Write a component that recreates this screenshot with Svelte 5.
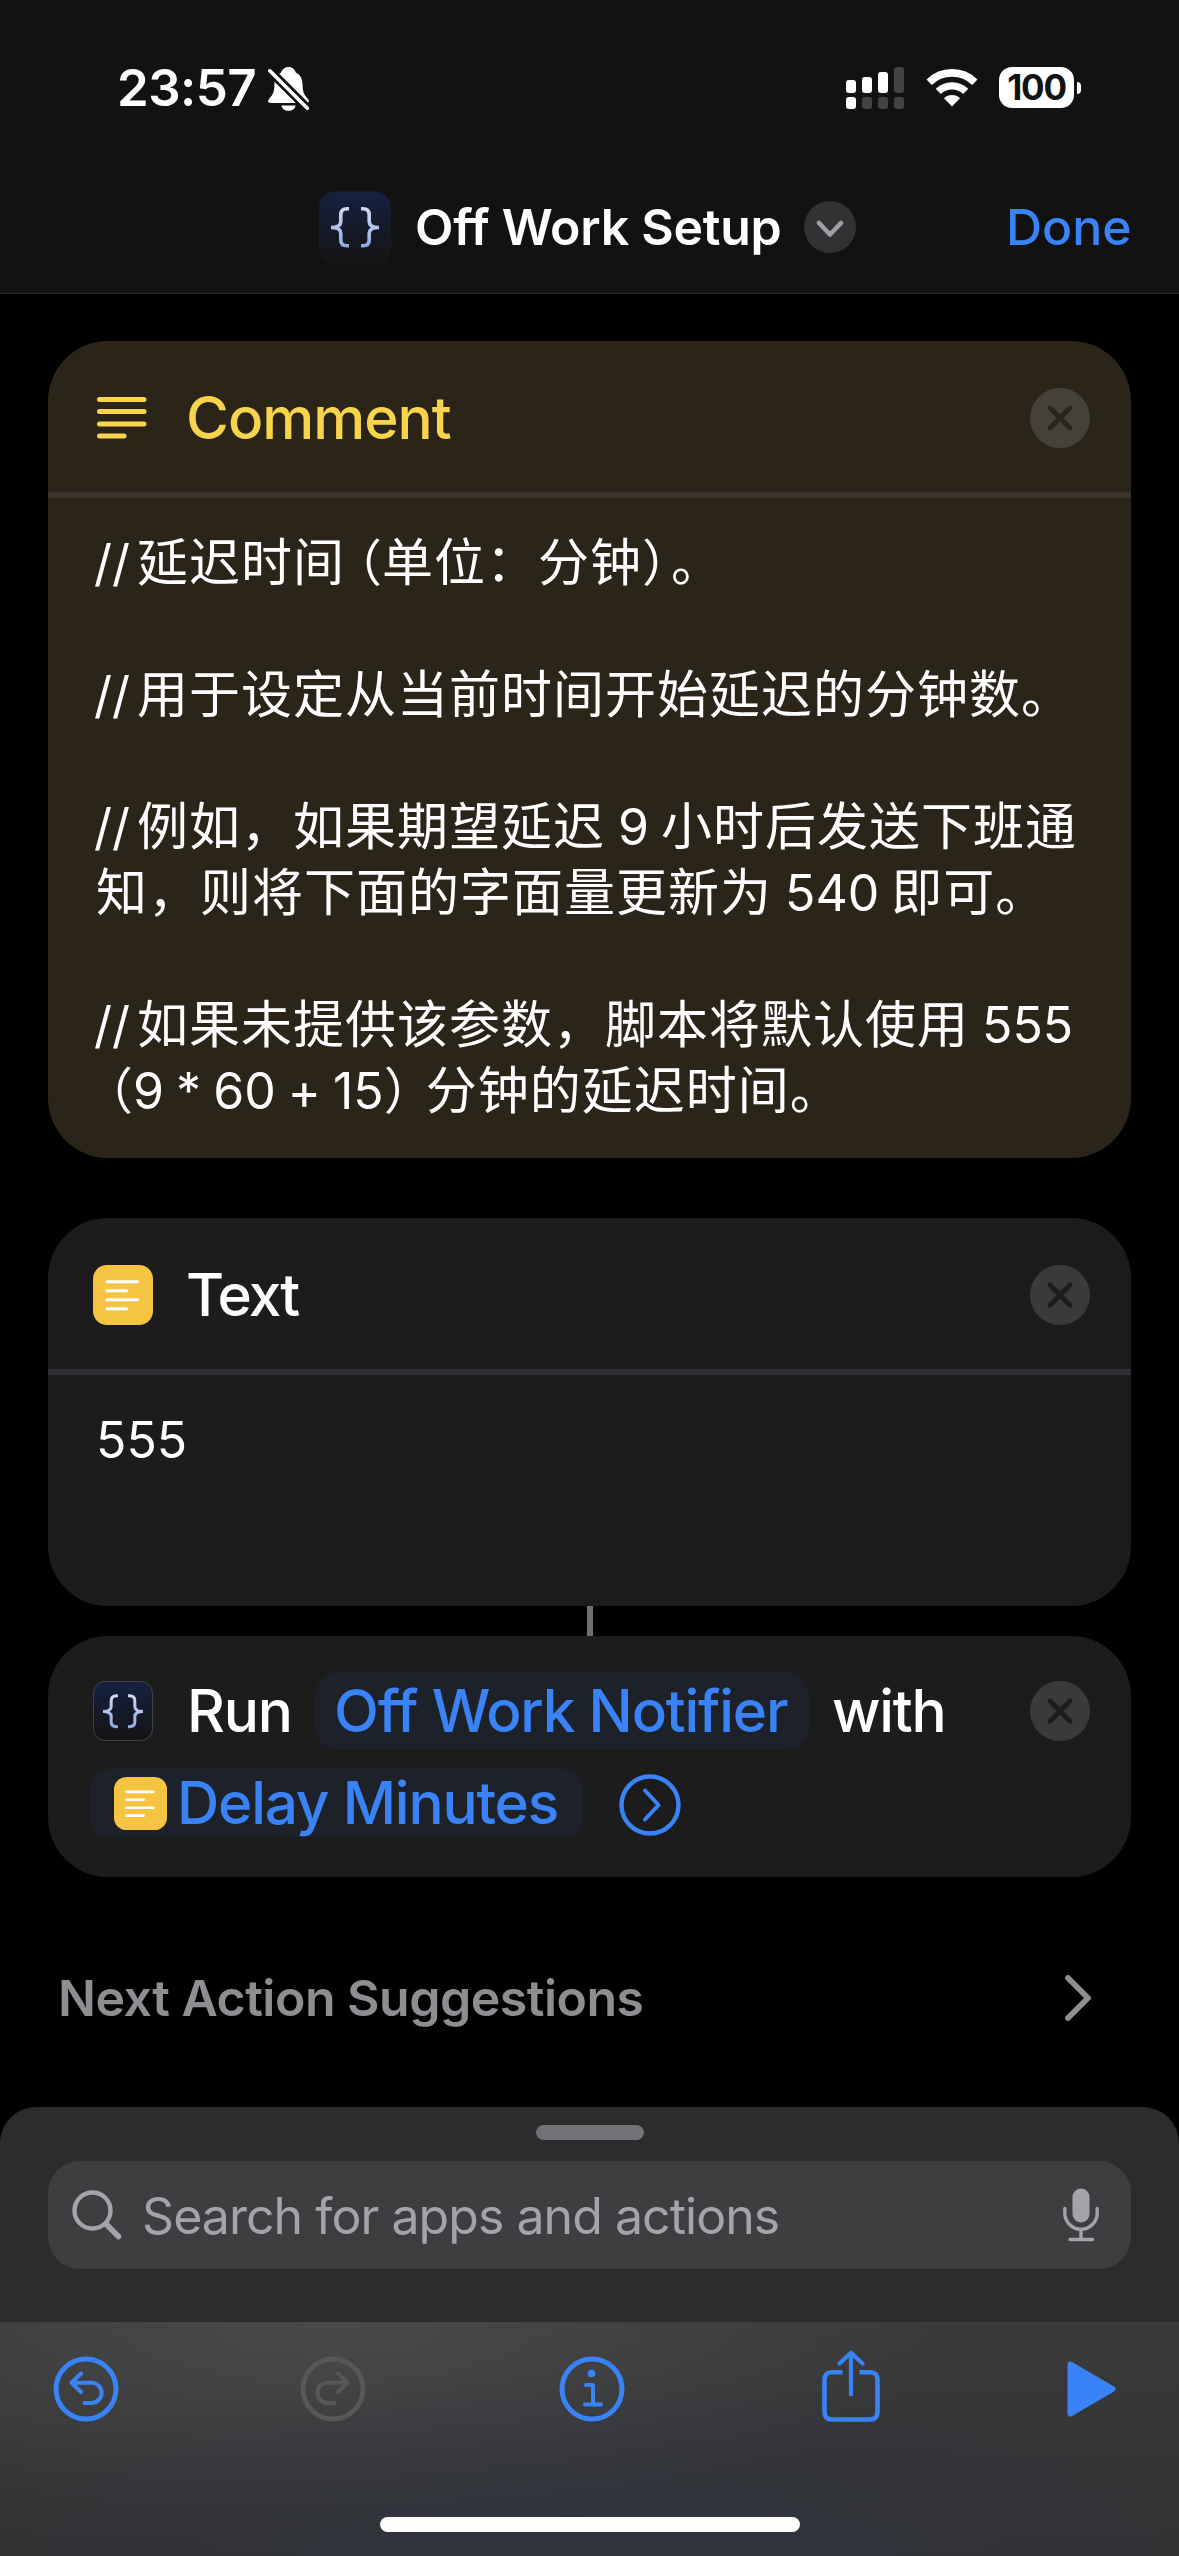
<script>
  const comment = [
    [['lat', '//'], ['cjk', '延迟时间'], ['open', '（'], ['cjk', '单位：分钟'], ['end', '）'], ['cjk', '。']],
    [],
    [['lat', '//'], ['cjk', '用于设定从当前时间开始延迟的分钟数。']],
    [],
    [['lat', '//'], ['cjk', '例如，如果期望延迟'], ['num', '9'], ['cjk', '小时后发送下班通']],
    [['cjk', '知，则将下面的字面量更新为'], ['num', '540'], ['cjk', '即可。']],
    [],
    [['lat', '//'], ['cjk', '如果未提供该参数，脚本将默认使用'], ['num', '555']],
    [['open', '（'], ['expr', '9 * 60 + 15'], ['shut', '）'], ['cjk', '分钟的延迟时间。']]
  ];
</script>

{#snippet braces()}
  <svg viewBox="0 0 72 72">
    <defs>
      <linearGradient id="night" x1="0" y1="0" x2="0" y2="1">
        <stop offset="0" stop-color="#152140" />
        <stop offset="1" stop-color="#141414" />
      </linearGradient>
      <linearGradient id="ink" gradientUnits="userSpaceOnUse" x1="0" y1="16" x2="0" y2="56">
        <stop offset="0" stop-color="#d3daf2" />
        <stop offset="1" stop-color="#8fabe2" />
      </linearGradient>
    </defs>
    <rect x="0.5" y="0.5" width="71" height="71" rx="15" fill="url(#night)" class="rim" />
    <g fill="none" stroke="url(#ink)" stroke-width="3.6">
      <path d="M30 17.8H28Q21.8 17.8 21.8 24V30.5Q21.8 36.5 12 36.5Q21.8 36.5 21.8 42.5V49Q21.8 54.8 28 54.8H30" />
      <path d="M42 17.8H44Q50.2 17.8 50.2 24V30.5Q50.2 36.5 60 36.5Q50.2 36.5 50.2 42.5V49Q50.2 54.8 44 54.8H42" />
    </g>
  </svg>
{/snippet}

{#snippet note()}
  <svg viewBox="0 0 60 60">
    <rect width="60" height="60" rx="14" fill="#f5c443" />
    <path d="M14 16.8H44.5M14 25.8H33.5M14 34.8H44.5M14 43.8H33.5" stroke="#fff" stroke-width="3" stroke-linecap="round" />
  </svg>
{/snippet}

{#snippet close()}
  <svg class="close" viewBox="0 0 60 60">
    <circle cx="30" cy="30" r="30" class="disc" />
    <path d="M20 20L40 40M40 20L20 40" class="cross" stroke-width="4.8" stroke-linecap="round" />
  </svg>
{/snippet}

<div class="screen">
  <header>
    <div class="status">
      <span class="time">23:57</span>
      <svg class="bell" viewBox="0 0 41 44">
        <path d="M20.5 0C16.5 0 14 2.5 13.2 5.5C8.5 7.8 6.5 12 6.4 18C6.3 25 5 27.5 1.5 31.5C-1 34.5 0 36 3 36H38C41 36 42 34.5 39.5 31.5C36 27.5 34.7 25 34.6 18C34.5 12 32.5 7.8 27.8 5.5C27 2.5 24.5 0 20.5 0Z" fill="#fff" />
        <path d="M13.5 38.5H27.5C27 42 24.3 43.8 20.5 43.8S14 42 13.5 38.5Z" fill="#fff" />
        <path d="M1.8 3.8L39.5 41.3" stroke="#121212" stroke-width="9" />
        <path d="M1.8 3.8L39.3 41.2" stroke="#fff" stroke-width="3.6" stroke-linecap="round" />
      </svg>
      <svg class="signal" viewBox="0 0 58 42">
        <g fill="#fff">
          <rect x="0" y="13" width="10" height="13" rx="3" /><rect x="16" y="10" width="10" height="16" rx="3" />
          <rect x="32" y="5" width="10" height="21" rx="3" /><rect x="0" y="30" width="10" height="12" rx="3" />
        </g>
        <g fill="#434343">
          <rect x="48" y="0" width="10" height="26" rx="3" /><rect x="16" y="30" width="10" height="12" rx="3" />
          <rect x="32" y="30" width="10" height="12" rx="3" /><rect x="48" y="30" width="10" height="12" rx="3" />
        </g>
      </svg>
      <svg class="wifi" viewBox="0 0 52 38">
        <g fill="none" stroke="#fff">
          <path d="M3.2 13.2A32.5 32.5 0 0 1 48.8 13.2" stroke-width="7.6" />
          <path d="M12.3 22.4A19.6 19.6 0 0 1 39.7 22.4" stroke-width="7.2" />
        </g>
        <path d="M26 37.5L18 29.3A11.5 11.5 0 0 1 34 29.3Z" fill="#fff" />
      </svg>
      <div class="battery">100</div>
      <i class="nub"></i>
    </div>
    <nav>
      <span class="appicon">{@render braces()}</span>
      <h1>Off Work Setup</h1>
      <svg class="chev" viewBox="0 0 52 52">
        <circle cx="26" cy="26" r="26" fill="#323234" />
        <path d="M15 22L26 33.5L37 22" fill="none" stroke="#9f9fa6" stroke-width="4.6" stroke-linecap="round" stroke-linejoin="round" />
      </svg>
      <span class="done">Done</span>
    </nav>
  </header>

  <main>
    <section class="card comment">
      <div class="head">
        <svg class="lines" viewBox="0 0 60 60">
          <path d="M6.5 11.5H51M6.5 23.5H51M6.5 36H51M6.5 48H31" stroke="#f8d44c" stroke-width="5" stroke-linecap="round" />
        </svg>
        <h2>Comment</h2>
        {@render close()}
      </div>
      <div class="body">
        {#each comment as line}
          <p>{#each line as [kind, text]}<span class="seg {kind}">{text}</span>{/each}</p>
        {/each}
      </div>
    </section>

    <section class="card text">
      <div class="head">
        <span class="icon">{@render note()}</span>
        <h2>Text</h2>
        {@render close()}
      </div>
      <div class="body"><p>555</p></div>
    </section>
    <div class="link"></div>
    <section class="card run">
      <div class="row">
        <span class="icon">{@render braces()}</span>
        <span class="word">Run</span>
        <span class="pill">Off Work Notifier</span>
        <span class="with">with</span>
        {@render close()}
      </div>
      <div class="row second">
        <span class="pill var"><span class="mini">{@render note()}</span>Delay Minutes</span>
        <svg class="more" viewBox="0 0 62 62">
          <g fill="none" stroke="#3a83f7" stroke-linecap="round" stroke-linejoin="round">
            <circle cx="31" cy="31" r="28.5" stroke-width="4.4" />
            <path d="M26 16.5L39.5 31L26 45.5" stroke-width="4" />
          </g>
        </svg>
      </div>
    </section>

    <div class="next">
      <span>Next Action Suggestions</span>
      <svg viewBox="0 0 26 46"><path d="M3 3L23 23L3 43" fill="none" stroke="#8e8d92" stroke-width="5.8" stroke-linecap="round" stroke-linejoin="round" /></svg>
    </div>
  </main>

  <div class="sheet">
    <i class="grab"></i>
    <div class="search">
      <svg class="lens" viewBox="0 0 50 50">
        <g fill="none" stroke="#a4a3ac" stroke-linecap="round">
          <circle cx="20.5" cy="20.5" r="18" stroke-width="4.4" /><path d="M34 34L46.5 46.5" stroke-width="5.6" />
        </g>
      </svg>
      <span class="hint">Search for apps and actions</span>
      <svg class="mic" viewBox="0 0 36 54">
        <rect x="9.5" y="0.5" width="17" height="34" rx="8.5" fill="#a4a3ac" />
        <path d="M1.8 20.5V25A16.200 16.200 0 0 0 34.2 25V20.5M18 41.5V51M7 51.5H29.5" fill="none" stroke="#a4a3ac" stroke-width="3.4" stroke-linecap="round" />
      </svg>
    </div>
  </div>

  <footer>
    <div class="tools">
      <svg class="round" viewBox="0 0 66 66">
        <g fill="none" stroke="#3a83f7" stroke-linecap="round" stroke-linejoin="round">
          <circle cx="33" cy="33" r="30" stroke-width="5" />
          <path d="M28 17.5L18.5 26.7L28 36M19 26.7H38.5A10 10 0 0 1 38.5 47H31.5" stroke-width="4" />
        </g>
      </svg>
      <svg class="round redo" viewBox="0 0 66 66">
        <g fill="none" stroke="#575758" stroke-linecap="round" stroke-linejoin="round">
          <circle cx="33" cy="33" r="30" stroke-width="5" />
          <path d="M38 17.5L47.5 26.7L38 36M47 26.7H27.5A10 10 0 0 0 27.5 47H34.5" stroke-width="4" />
        </g>
      </svg>
      <svg class="round info" viewBox="0 0 66 66">
        <g fill="none" stroke="#3a83f7" stroke-linecap="round" stroke-linejoin="round">
          <circle cx="33" cy="33" r="30" stroke-width="5" />
          <path d="M27 29H34V48.5M26 48.5H42" stroke-width="4" />
        </g>
        <circle cx="32.5" cy="17.5" r="3.8" fill="#3a83f7" />
      </svg>
      <svg class="share" viewBox="0 0 58 72">
        <g fill="none" stroke="#3a83f7" stroke-width="4.6">
          <path d="M20.5 22.3H10Q2.5 22.3 2.5 30V62Q2.5 69.5 10 69.5H48Q55.5 69.5 55.5 62V30Q55.5 22.3 48 22.3H37.500" />
          <path d="M29 3V44.5M17.5 13.5L29 2.8L40.500 13.5" stroke-width="4.2" stroke-linecap="round" stroke-linejoin="round" />
        </g>
      </svg>
      <svg class="play" viewBox="0 0 49 56">
        <path d="M3.5 3.5L45.5 28L3.5 52.5Z" fill="#3a83f7" stroke="#3a83f7" stroke-width="6" stroke-linejoin="round" />
      </svg>
    </div>
    <i class="home"></i>
  </footer>
</div>

<style>
  :global(body) { margin: 0; background: #000; }
  .screen {
    width: 1179px; height: 2556px; display: flex; flex-direction: column; overflow: hidden;
    background: #000; color: #fff; font-family: Inter, "Noto Sans CJK SC", sans-serif;
    font-size: 50px; line-height: 66px; white-space: nowrap;
  }
  svg { display: block; flex: none; }
  h1, h2, p { margin: 0; font: inherit; }
  i { display: block; }

  header { height: 294px; background: #121212; border-bottom: 1px solid #2a2a2b; flex: none; box-sizing: border-box; }
  .status { display: flex; align-items: center; height: 175px; box-sizing: border-box; padding-left: 117px; }
  .time { width: 151px; font-size: 51px; font-weight: 600; letter-spacing: -.6px; }
  .bell { width: 41px; height: 44px; margin-top: 2px; }
  .signal { width: 58px; height: 42px; margin-left: 537px; }
  .wifi { width: 52px; height: 38px; margin-left: 22px; }
  .battery {
    width: 75px; height: 41px; margin-left: 21px; border-radius: 13px; background: #fff; color: #121212;
    font-size: 35px; line-height: 41px; font-weight: 700; text-align: center; letter-spacing: -1.2px;
  }
  .nub { width: 4px; height: 12px; margin-left: 3px; border-radius: 0 6px 6px 0; background: #fff; }
  nav { display: flex; align-items: center; height: 72px; margin-top: 16px; padding-left: 319px; }
  .appicon { width: 72px; height: 72px; }
  h1 { width: 389px; margin-left: 24px; font-weight: 600; letter-spacing: -.25px; }
  .chev { width: 52px; height: 52px; }
  .done { margin-left: 150px; color: #3a83f7; font-weight: 500; }

  main { flex: none; height: 1813px; box-sizing: border-box; padding: 47px 48px 0; }
  .card { border-radius: 60px; background: #1c1c1c; overflow: hidden; --disc: #3a3a3c; }
  .comment { background: #2b2419; height: 817px; --disc: #464139; }
  .disc { fill: var(--disc); }
  .cross { stroke: #1c1c1c; }
  .comment .cross { stroke: #2b2419; }
  .head { display: flex; align-items: center; height: 149px; border-bottom: 6px solid #302f35; padding: 2px 41px 0 45px; }
  .comment .head { border-color: #3b3229; }
  .lines, .icon { width: 60px; height: 60px; flex: none; }
  h2, .word, .with, .pill { font-size: 58.5px; font-weight: 500; letter-spacing: -1.2px; }
  h2 { margin-left: 33px; flex: 1; }
  .comment h2 { color: #f8d44c; letter-spacing: -1px; }
  .text h2 { letter-spacing: -2px; }
  .close { width: 60px; height: 60px; }
  .body { padding: 32px 48px 0; }
  .body p { height: 66px; }
  .seg { display: inline-block; }
  .cjk { font-size: 51px; letter-spacing: 1px; }
  .lat { margin: 0 7px 0 -2px; }
  .num { margin: 0 12px 0 13px; }
  .open, .end, .shut { font-feature-settings: "halt"; }
  .open { margin-left: 12px; }
  .end { margin-right: 4px; }
  .shut { margin-right: 17px; }
  .expr { word-spacing: -2px; font-variant-ligatures: no-contextual; }
  .text { margin-top: 60px; height: 388px; }
  .link { width: 6px; height: 30px; margin-left: 539px; background: #6e6e73; }
  .run { height: 241px; box-sizing: border-box; padding: 36px 41px 0 45px; }
  .row { display: flex; align-items: center; height: 78px; }
  .word { width: 102px; margin-left: 34px; }
  .pill { display: flex; align-items: center; box-sizing: border-box; width: 494px; height: 78px; margin-left: 26px; padding-left: 19px; border-radius: 24px; background: #1d2129; color: #3a83f7; }
  .with { flex: 1; margin-left: 23px; }
  .second { margin-top: 19px; height: 68px; margin-left: -3px; }
  .pill.var { width: 493px; height: 68px; margin: 0; padding-left: 24px; border-radius: 18px; }
  .mini { width: 53px; height: 53px; margin-right: 10px; }
  .more { width: 62px; height: 62px; margin: 3px 0 0 36px; }
  .next { display: flex; align-items: center; justify-content: space-between; height: 66px; margin-top: 88px; padding: 0 40px 0 10px; color: #8e8d92; font-weight: 600; letter-spacing: -.5px; }
  .next svg { width: 26px; height: 46px; }

  .icon :global(svg), .mini :global(svg), .appicon :global(svg) { width: 100%; height: 100%; }
  .rim { stroke: #1b1c20; stroke-width: 1px; }
  .icon .rim { stroke: #3d3e42; stroke-width: 1.4px; }

  .sheet { height: 215px; flex: none; background: #2c2c2c; border-radius: 36px 36px 0 0; box-sizing: border-box; padding: 18px 48px 0; }
  .grab { width: 108px; height: 15px; margin: 0 auto 21px; border-radius: 8px; background: #727177; }
  .search { display: flex; align-items: center; height: 108px; box-sizing: border-box; padding: 0 32px 0 24px; border-radius: 32px; background: #3e3e40; color: #a4a3ac; }
  .hint { flex: 1; margin: 2px 0 0 20px; letter-spacing: -.95px; }
  .lens { width: 50px; height: 50px; }
  .mic { width: 36px; height: 54px; }
  footer {
    flex: 1;
    background:
      radial-gradient(ellipse 700px 190px at 600px 234px, rgba(46, 52, 66, .75), transparent),
      radial-gradient(ellipse 620px 210px at 330px 0, rgba(78, 78, 79, .75), transparent),
      linear-gradient(#3a3a3b, #323232);
  }
  .tools { display: flex; align-items: center; height: 72px; padding: 28px 0 0 53px; }
  .round { width: 66px; height: 66px; margin-top: 5px; }
  .redo { margin-left: 181px; }
  .info { margin-left: 193px; }
  .share { width: 58px; height: 72px; margin-left: 197px; }
  .play { width: 49px; height: 56px; margin: 6px 0 0 187px; }
  .home { width: 420px; height: 15px; margin: 95px auto 0; border-radius: 8px; background: #fdfdfd; }
</style>
